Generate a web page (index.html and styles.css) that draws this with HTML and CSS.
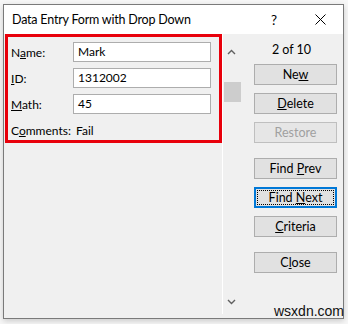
FILE: index.html
```html
<!DOCTYPE html>
<html lang="en">
<head>
  <meta charset="UTF-8">
  <title>Data Entry Form with Drop Down</title>
  <link rel="stylesheet" href="styles.css">
</head>
<body>
  <div class="window">
    <div class="titlebar">
      <span class="title">Data Entry Form with Drop Down</span>
      <span class="help">?</span>
      <svg class="close-x" width="11" height="11" viewBox="0 0 11 11">
        <path d="M0.5 0.5 L10.5 10.5 M10.5 0.5 L0.5 10.5" stroke="#000" stroke-width="1"/>
      </svg>
    </div>
    <div class="content">
      <div class="pane">
        <div class="record">
          <label class="field-label">N<u>a</u>me:</label>
          <div class="field-input">Mark</div>
          <label class="field-label"><u>I</u>D:</label>
          <div class="field-input">1312002</div>
          <label class="field-label"><u>M</u>ath:</label>
          <div class="field-input">45</div>
          <label class="field-label">C<u>o</u>mments:</label>
          <div class="field-value">Fail</div>
        </div>
      </div>
      <div class="scrollbar">
        <svg class="arrow" width="9" height="6" viewBox="0 0 9 6">
          <path d="M1 5 L4.5 1.5 L8 5" fill="none" stroke="#606060" stroke-width="1.4"/>
        </svg>
        <div class="thumb"></div>
        <div class="track"></div>
        <svg class="arrow" width="9" height="6" viewBox="0 0 9 6">
          <path d="M1 1 L4.5 4.5 L8 1" fill="none" stroke="#606060" stroke-width="1.4"/>
        </svg>
      </div>
      <div class="actions">
        <div class="count">2 of 10</div>
        <button class="btn">Ne<u>w</u></button>
        <button class="btn"><u>D</u>elete</button>
        <button class="btn disabled">Restore</button>
        <button class="btn group">Find <u>P</u>rev</button>
        <button class="btn focused">Find <u>N</u>ext</button>
        <button class="btn"><u>C</u>riteria</button>
        <button class="btn group">C<u>l</u>ose</button>
      </div>
    </div>
  </div>
  <div class="watermark">wsxdn.com</div>
</body>
</html>
```

FILE: styles.css
```css
body {
  margin: 0;
  padding: 4px 0 0 3px;
  background-color: #f7f7f7;
  font-family: Lato, "Noto Sans", sans-serif;
  font-size: 12px;
  color: #000;
  position: relative;
  height: 324px;
  box-sizing: border-box;
  overflow: hidden;
}

.window {
  width: 341px;
  height: 315px;
  box-sizing: border-box;
  border: 1px solid #7a7a7a;
  background: #f0f0f0;
  box-shadow: 0 2px 6px rgba(0, 0, 0, 0.18);
}

.titlebar {
  height: 29px;
  background: #ffffff;
  display: flex;
  align-items: center;
  padding-left: 8px;
}

.title {
  flex: 1;
  font-size: 12.5px;
  letter-spacing: -0.2px;
}

.help {
  font-size: 13.5px;
  margin-right: 38px;
}

.close-x {
  margin-right: 17px;
}

.content {
  display: flex;
  height: 284px;
}

.pane {
  width: 218px;
}

.record {
  margin-left: 1px;
  width: 217px;
  height: 109px;
  box-sizing: border-box;
  border: 3px solid #e8000b;
  padding: 5px 8px 0 3px;
  display: grid;
  grid-template-columns: 62px 1fr;
  grid-auto-rows: 20px;
  row-gap: 6px;
  align-items: center;
}

.field-input {
  height: 20px;
  box-sizing: border-box;
  border: 1px solid #adadad;
  background: #ffffff;
  padding-left: 4px;
  line-height: 18px;
}

.field-value {
  padding-left: 3px;
}

.scrollbar {
  width: 17px;
  border-left: 1px solid #ffffff;
  margin-bottom: 4px;
  display: flex;
  flex-direction: column;
  align-items: center;
}

.arrow {
  margin: 15px 0 0 0;
}

.scrollbar .arrow:last-child {
  margin: 0 0 9px 0;
}

.thumb {
  width: 17px;
  height: 20px;
  margin-top: 27px;
  margin-left: 1px;
  background: #cdcdcd;
}

.track {
  flex: 1;
}

.actions {
  width: 102px;
  display: flex;
  flex-direction: column;
  padding-left: 14px;
  box-sizing: border-box;
}

.count {
  height: 20px;
  line-height: 20px;
  margin-top: 6px;
  margin-bottom: 4px;
  width: 83px;
  text-align: center;
  padding-right: 8px;
  box-sizing: border-box;
  font-size: 12.5px;
}

.btn {
  width: 83px;
  height: 21px;
  box-sizing: border-box;
  border: 1px solid #adadad;
  background: #e1e1e1;
  font-family: inherit;
  font-size: 12.5px;
  color: #000;
  padding: 0;
  margin: 0 0 8px 0;
  position: relative;
}

.btn.group {
  margin-top: 7px;
}

.btn.disabled {
  color: #a0a0a0;
  border-color: #bfbfbf;
  background: #e6e6e6;
}

.btn.focused {
  border-color: #0078d7;
  box-shadow: inset 0 0 0 1px #0078d7;
}

.btn.focused::after {
  content: "";
  position: absolute;
  inset: 2px;
  border: 1px dotted #000;
}

.watermark {
  position: absolute;
  left: 274px;
  top: 303px;
  font-family: "Liberation Sans", Arial, sans-serif;
  font-size: 14px;
  color: #111;
}
```
